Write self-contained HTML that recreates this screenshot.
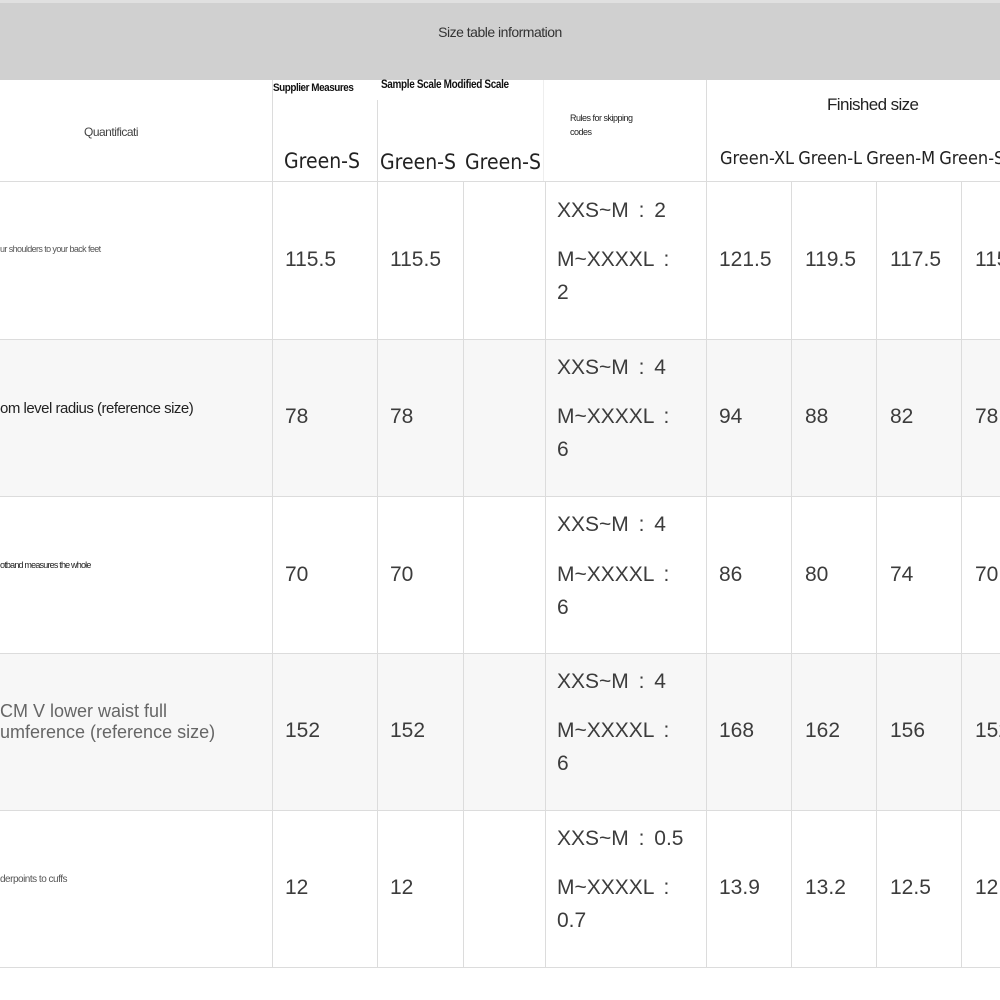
<!DOCTYPE html>
<html><head><meta charset="utf-8"><style>
*{margin:0;padding:0;box-sizing:border-box}
body{width:1000px;height:1000px;background:#fff;position:relative;overflow:hidden;font-family:"Liberation Sans",sans-serif;color:#3a3a3a}
.a{position:absolute;white-space:nowrap}
.v{position:absolute;width:1px;background:#dcdcdc}
.h{position:absolute;height:1px;left:0;width:1000px;background:#dcdcdc}
.n{position:absolute;font-size:21px;line-height:24px;white-space:nowrap;color:#3c3c3c;word-spacing:4px}
.c{font-family:"DejaVu Sans Condensed","Liberation Sans Narrow","Liberation Sans",sans-serif}
</style></head><body>
<div class="a" style="left:0;top:0;width:1000px;height:3px;background:#e0e0e0"></div>
<div class="a" style="left:0;top:3px;width:1000px;height:77px;background:#d0d0d0"></div>
<div class="a" style="left:0;top:24px;width:1000px;text-align:center;font-size:14px;color:#333;letter-spacing:-0.5px">Size table information</div>

<div class="a" style="left:0;top:339px;width:1000px;height:157px;background:#f7f7f7"></div>
<div class="a" style="left:0;top:653px;width:1000px;height:157px;background:#f7f7f7"></div>

<div class="a" style="left:84px;top:125px;font-size:12px;color:#444;letter-spacing:-0.5px">Quantificati</div>
<div class="a" style="left:273px;top:82px;font-size:11px;color:#111;letter-spacing:-0.5px;font-weight:bold;transform:scaleX(0.9);transform-origin:left">Supplier Measures</div>
<div class="a" style="left:381px;top:77px;font-size:12px;color:#111;letter-spacing:-0.4px;font-weight:bold;transform:scaleX(0.83);transform-origin:left">Sample Scale Modified Scale</div>
<div class="a" style="left:570px;top:111px;font-size:9px;line-height:14px;color:#222;letter-spacing:-0.5px">Rules for skipping<br>codes</div>
<div class="a" style="left:827px;top:95px;font-size:17px;color:#222;letter-spacing:-0.6px">Finished size</div>
<div class="a c" style="left:284px;top:149px;font-size:21px;color:#222">Green-S</div>
<div class="a c" style="left:380px;top:150px;font-size:21px;color:#222">Green-S</div>
<div class="a c" style="left:465px;top:150px;font-size:21px;color:#222">Green-S</div>
<div class="a c" style="left:720px;top:148px;font-size:18px;color:#222;word-spacing:-1px">Green-XL Green-L Green-M Green-S</div>

<div class="v" style="left:272px;top:80px;height:101px"></div>
<div class="v" style="left:377px;top:100px;height:81px"></div>
<div class="v" style="left:543px;top:80px;height:101px;background:#eee"></div>
<div class="v" style="left:706px;top:80px;height:101px"></div>

<div class="h" style="top:181px"></div>
<div class="h" style="top:339px"></div>
<div class="h" style="top:496px"></div>
<div class="h" style="top:653px"></div>
<div class="h" style="top:810px"></div>
<div class="h" style="top:967px"></div>
<div class="v" style="left:272px;top:181px;height:786px"></div>
<div class="v" style="left:377px;top:181px;height:786px"></div>
<div class="v" style="left:463px;top:181px;height:786px"></div>
<div class="v" style="left:545px;top:181px;height:786px"></div>
<div class="v" style="left:706px;top:181px;height:786px"></div>
<div class="v" style="left:791px;top:181px;height:786px"></div>
<div class="v" style="left:876px;top:181px;height:786px"></div>
<div class="v" style="left:961px;top:181px;height:786px"></div>

<div class="a" style="left:0;top:244px;font-size:9px;color:#555;letter-spacing:-0.6px">ur shoulders to your back feet</div>
<div class="a" style="left:0;top:400px;font-size:15px;color:#222;letter-spacing:-0.5px">om level radius (reference size)</div>
<div class="a" style="left:0;top:560px;font-size:9px;color:#222;letter-spacing:-0.8px">otband measures the whole</div>
<div class="a" style="left:0;top:701px;font-size:18px;line-height:21px;color:#666">CM V lower waist full<br>umference (reference size)</div>
<div class="a" style="left:0;top:874px;font-size:10px;color:#555;letter-spacing:-0.5px">derpoints to cuffs</div>

<div class="n" style="left:285px;top:248px">115.5</div>
<div class="n" style="left:390px;top:248px">115.5</div>
<div class="n" style="left:557px;top:199px">XXS~M : 2</div>
<div class="n" style="left:557px;top:248px">M~XXXXL :</div>
<div class="n" style="left:557px;top:281px">2</div>
<div class="n" style="left:719px;top:248px">121.5</div>
<div class="n" style="left:805px;top:248px">119.5</div>
<div class="n" style="left:890px;top:248px">117.5</div>
<div class="n" style="left:975px;top:248px">115.5</div>

<div class="n" style="left:285px;top:405px">78</div>
<div class="n" style="left:390px;top:405px">78</div>
<div class="n" style="left:557px;top:356px">XXS~M : 4</div>
<div class="n" style="left:557px;top:405px">M~XXXXL :</div>
<div class="n" style="left:557px;top:438px">6</div>
<div class="n" style="left:719px;top:405px">94</div>
<div class="n" style="left:805px;top:405px">88</div>
<div class="n" style="left:890px;top:405px">82</div>
<div class="n" style="left:975px;top:405px">78</div>

<div class="n" style="left:285px;top:563px">70</div>
<div class="n" style="left:390px;top:563px">70</div>
<div class="n" style="left:557px;top:513px">XXS~M : 4</div>
<div class="n" style="left:557px;top:563px">M~XXXXL :</div>
<div class="n" style="left:557px;top:596px">6</div>
<div class="n" style="left:719px;top:563px">86</div>
<div class="n" style="left:805px;top:563px">80</div>
<div class="n" style="left:890px;top:563px">74</div>
<div class="n" style="left:975px;top:563px">70</div>

<div class="n" style="left:285px;top:719px">152</div>
<div class="n" style="left:390px;top:719px">152</div>
<div class="n" style="left:557px;top:670px">XXS~M : 4</div>
<div class="n" style="left:557px;top:719px">M~XXXXL :</div>
<div class="n" style="left:557px;top:752px">6</div>
<div class="n" style="left:719px;top:719px">168</div>
<div class="n" style="left:805px;top:719px">162</div>
<div class="n" style="left:890px;top:719px">156</div>
<div class="n" style="left:975px;top:719px">152</div>

<div class="n" style="left:285px;top:876px">12</div>
<div class="n" style="left:390px;top:876px">12</div>
<div class="n" style="left:557px;top:827px">XXS~M : 0.5</div>
<div class="n" style="left:557px;top:876px">M~XXXXL :</div>
<div class="n" style="left:557px;top:909px">0.7</div>
<div class="n" style="left:719px;top:876px">13.9</div>
<div class="n" style="left:805px;top:876px">13.2</div>
<div class="n" style="left:890px;top:876px">12.5</div>
<div class="n" style="left:975px;top:876px">12</div>
</body></html>
